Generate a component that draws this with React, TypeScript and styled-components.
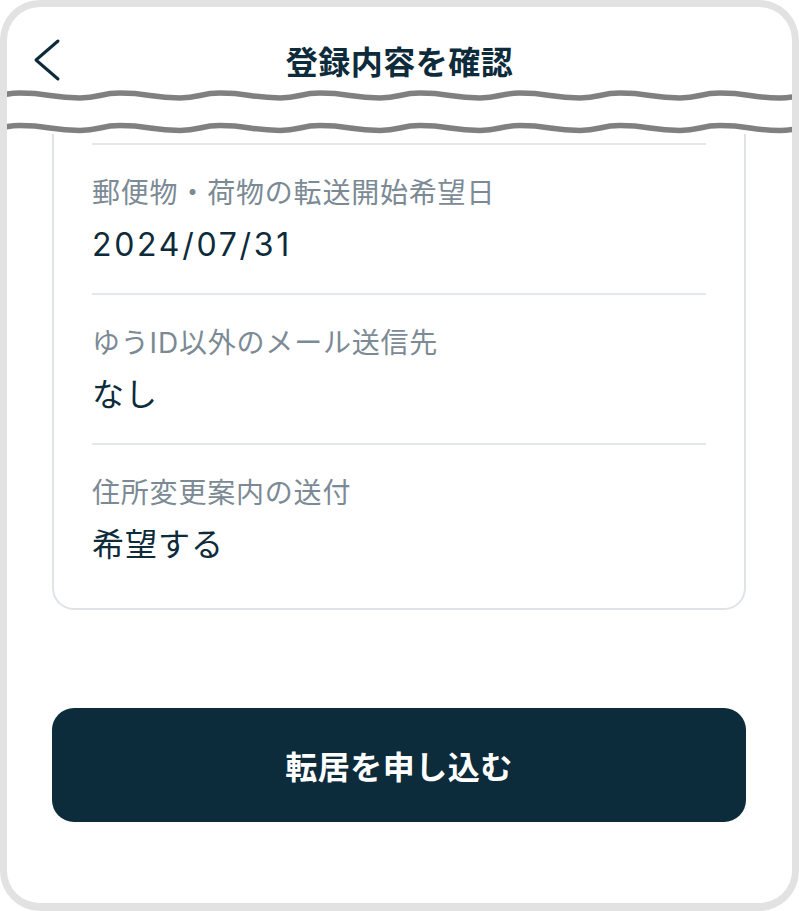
import styled, { createGlobalStyle } from 'styled-components';

const GlobalStyle = createGlobalStyle`
  html, body {
    margin: 0;
    padding: 0;
    background: #ffffff;
  }
  body {
    font-family: "Noto Sans CJK JP", "Noto Sans", sans-serif;
    color: #0d2b3a;
  }
  * {
    box-sizing: border-box;
  }
`;

const Frame = styled.div`
  width: 799px;
  height: 911px;
  border: 7px solid #e2e2e2;
  border-bottom-width: 8px;
  border-radius: 40px;
  background: #ffffff;
  overflow: hidden;
  display: flex;
  flex-direction: column;
`;

const Header = styled.header`
  position: relative;
  display: flex;
  justify-content: center;
  align-items: center;
  padding: 33px 0 8px;
`;

const BackButton = styled.button`
  position: absolute;
  left: 22px;
  top: 28px;
  width: 36px;
  height: 50px;
  padding: 0;
  border: none;
  background: transparent;
  display: flex;
  align-items: center;
  justify-content: center;
`;

const Title = styled.h1`
  margin: 0;
  font-size: 32px;
  line-height: 40px;
  font-weight: 700;
  letter-spacing: 0.5px;
  color: #0d2b3a;
`;

const Cut = styled.svg`
  display: block;
  width: 785px;
  height: 46px;
  flex-shrink: 0;
`;

const Content = styled.main`
  display: flex;
  flex-direction: column;
  padding: 0 46px 0 45px;
`;

const Card = styled.section`
  border: 2px solid #dfe3e7;
  border-top: none;
  border-radius: 0 0 22px 22px;
  padding: 9px 38px 15px;
`;

const Row = styled.div`
  border-top: 2px solid #e4e8eb;
  padding: 28px 0 26px;
  display: flex;
  flex-direction: column;
  gap: 10px;
`;

const Label = styled.div`
  font-family: "Inter", "Noto Sans CJK JP", sans-serif;
  font-size: 28px;
  line-height: 40px;
  letter-spacing: 0.8px;
  color: #7b8a94;
`;

const Value = styled.div<{ $numeric?: boolean }>`
  font-family: "Inter", "Noto Sans CJK JP", sans-serif;
  font-size: 32px;
  line-height: 44px;
  letter-spacing: ${(p) => (p.$numeric ? '2.7px' : '1px')};
  color: #0d2b3a;
`;

const SubmitButton = styled.button`
  margin-top: 98px;
  height: 114px;
  border: none;
  border-radius: 22px;
  background: #0c2b3b;
  color: #ffffff;
  font-family: "Noto Sans CJK JP", "Noto Sans", sans-serif;
  font-size: 32px;
  font-weight: 700;
  letter-spacing: 0.5px;
`;

// wave in page coordinates: highs at 20 + 100k, lows at 80 + 100k
function wavePath(y: number) {
  const a = 2.4;
  let d = `M -80 ${y - a}`;
  for (let x = -80; x < 820; x += 100) {
    const low = x + 60;
    const high = x + 100;
    d += ` C ${x + 30} ${y - a} ${low - 30} ${y + a} ${low} ${y + a}`;
    d += ` C ${low + 20} ${y + a} ${high - 20} ${y - a} ${high} ${y - a}`;
  }
  return d;
}

const rows = [
  { label: '郵便物・荷物の転送開始希望日', value: '2024/07/31', numeric: true },
  { label: 'ゆうID以外のメール送信先', value: 'なし' },
  { label: '住所変更案内の送付', value: '希望する' },
];

export default function App() {
  return (
    <>
      <GlobalStyle />
      <Frame>
        <Header>
          <BackButton aria-label="戻る">
            <svg width="30" height="44" viewBox="0 0 30 44">
              <polyline
                points="26,3 4,22 26,41"
                fill="none"
                stroke="#0d2b3a"
                strokeWidth="3"
                strokeLinecap="round"
                strokeLinejoin="round"
              />
            </svg>
          </BackButton>
          <Title>登録内容を確認</Title>
        </Header>
        <Cut viewBox="7 0 785 46">
          <path d={wavePath(7.5)} fill="none" stroke="#808080" strokeWidth="5.5" />
          <path d={wavePath(40)} fill="none" stroke="#808080" strokeWidth="5.5" />
        </Cut>
        <Content>
          <Card>
            {rows.map((r) => (
              <Row key={r.label}>
                <Label>{r.label}</Label>
                <Value $numeric={r.numeric}>{r.value}</Value>
              </Row>
            ))}
          </Card>
          <SubmitButton>転居を申し込む</SubmitButton>
        </Content>
      </Frame>
    </>
  );
}
